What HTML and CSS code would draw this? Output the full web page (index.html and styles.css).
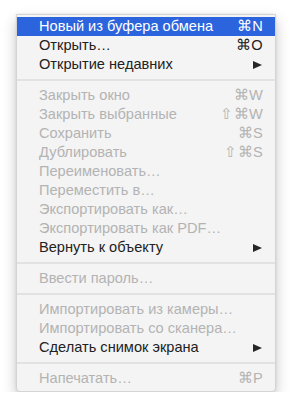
FILE: index.html
```html
<!DOCTYPE html>
<html lang="ru">
<head>
<meta charset="utf-8">
<link rel="stylesheet" href="styles.css">
</head>
<body>
<div class="menu">
  <div class="item active"><span class="label">Новый из буфера обмена</span><span class="key">⌘N</span></div>
  <div class="item"><span class="label">Открыть…</span><span class="key">⌘O</span></div>
  <div class="item"><span class="label">Открытие недавних</span><span class="arrow"></span></div>
  <div class="sep"></div>
  <div class="item off"><span class="label">Закрыть окно</span><span class="key">⌘W</span></div>
  <div class="item off"><span class="label">Закрыть выбранные</span><span class="key">⇧⌘W</span></div>
  <div class="item off"><span class="label">Сохранить</span><span class="key">⌘S</span></div>
  <div class="item off"><span class="label">Дублировать</span><span class="key">⇧⌘S</span></div>
  <div class="item off"><span class="label">Переименовать…</span></div>
  <div class="item off"><span class="label">Переместить в…</span></div>
  <div class="item off"><span class="label">Экспортировать как…</span></div>
  <div class="item off"><span class="label">Экспортировать как PDF…</span></div>
  <div class="item"><span class="label">Вернуть к объекту</span><span class="arrow"></span></div>
  <div class="sep"></div>
  <div class="item off"><span class="label">Ввести пароль…</span></div>
  <div class="sep"></div>
  <div class="item off"><span class="label">Импортировать из камеры…</span></div>
  <div class="item off"><span class="label">Импортировать со сканера…</span></div>
  <div class="item"><span class="label">Сделать снимок экрана</span><span class="arrow"></span></div>
  <div class="sep"></div>
  <div class="item off"><span class="label">Напечатать…</span><span class="key">⌘P</span></div>
</div>
</body>
</html>
```
FILE: styles.css
```css
html, body {
  margin: 0;
  padding: 0;
  background: #ffffff;
}
body {
  padding: 14px 0 0 16px;
  font-family: "Liberation Sans", Arial, sans-serif;
  font-size: 14.6px;
}
.menu {
  width: 258px;
  background: #f4f4f4;
  border: 1px solid #d4d4d4;
  border-radius: 0 0 4px 4px;
  padding: 2px 0 3px;
  box-shadow: 0 6px 14px rgba(0, 0, 0, 0.22), 0 0 3px rgba(0, 0, 0, 0.08);
  display: flex;
  flex-direction: column;
}
.item {
  height: 19px;
  display: flex;
  align-items: center;
  padding: 0 12px 0 22px;
  color: #222222;
  line-height: 19px;
}
.item.active {
  background: #2b64dc;
  color: #ffffff;
}
.item.off {
  color: #b3b3b3;
}
.label {
  flex: 1;
  white-space: nowrap;
}
.key {
  white-space: nowrap;
  letter-spacing: 0.3px;
}
.arrow {
  width: 0;
  height: 0;
  margin-right: 1px;
  border-top: 4.5px solid transparent;
  border-bottom: 4.5px solid transparent;
  border-left: 9px solid #262626;
}
.sep {
  height: 12px;
  display: flex;
  align-items: center;
}
.sep::before {
  content: "";
  display: block;
  width: 100%;
  height: 2px;
  background: #e2e2e2;
}
```
